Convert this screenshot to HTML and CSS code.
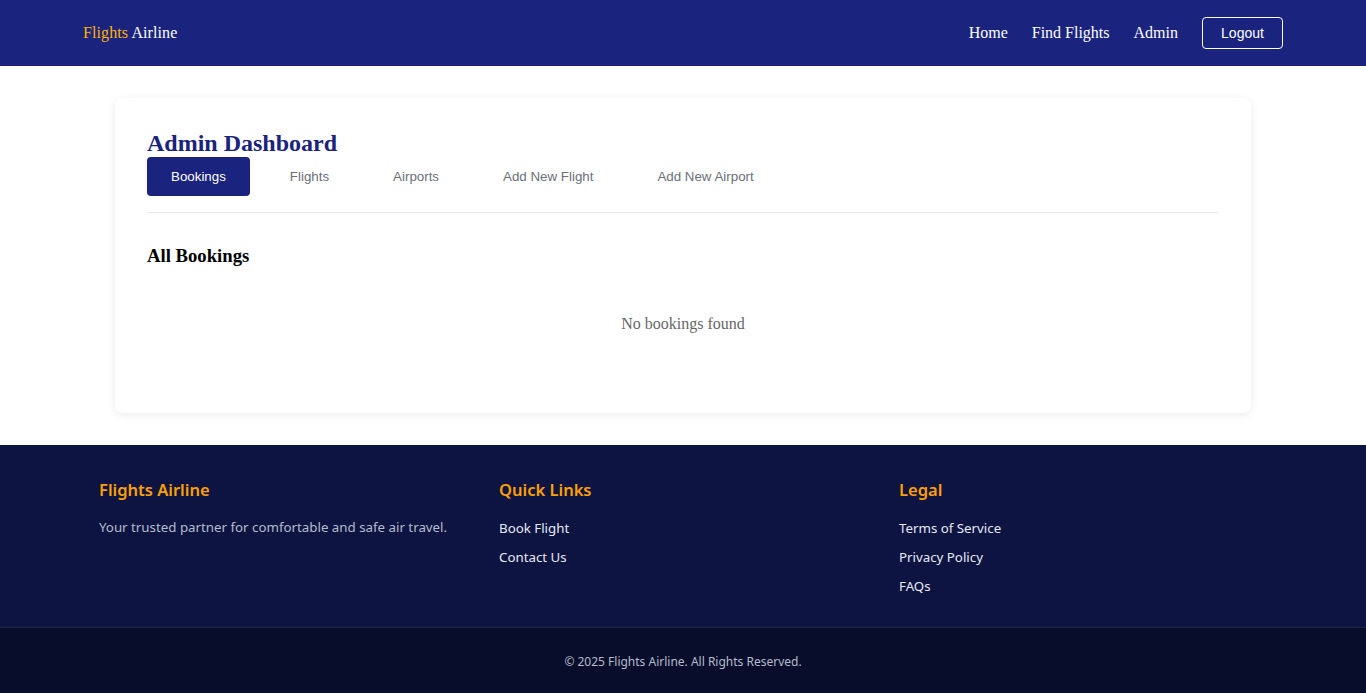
FILE: index.html
```html
<!DOCTYPE html>
<html lang="en">
<head>
<meta charset="utf-8">
<title>Admin Dashboard - Flights Airline</title>
<link rel="stylesheet" href="styles.css">
</head>
<body>
<header class="topbar">
  <div class="topbar-inner">
    <a class="brand" href="#"><span class="brand-accent">Flights</span> Airline</a>
    <nav class="nav">
      <a class="nav-link" href="#">Home</a>
      <a class="nav-link" href="#">Find Flights</a>
      <a class="nav-link" href="#">Admin</a>
      <button class="logout-btn" type="button">Logout</button>
    </nav>
  </div>
</header>

<main class="main">
  <section class="card">
    <h1 class="card-title">Admin Dashboard</h1>
    <div class="tabs">
      <button class="tab tab-active" type="button">Bookings</button>
      <button class="tab" type="button">Flights</button>
      <button class="tab" type="button">Airports</button>
      <button class="tab" type="button">Add New Flight</button>
      <button class="tab" type="button">Add New Airport</button>
    </div>
    <div class="panel">
      <h3 class="panel-title">All Bookings</h3>
      <p class="empty">No bookings found</p>
    </div>
  </section>
</main>

<footer class="footer">
  <div class="footer-inner">
    <div class="footer-col">
      <h4 class="footer-heading">Flights Airline</h4>
      <p class="footer-text">Your trusted partner for comfortable and safe air travel.</p>
    </div>
    <div class="footer-col">
      <h4 class="footer-heading">Quick Links</h4>
      <ul class="footer-links">
        <li><a href="#">Book Flight</a></li>
        <li><a href="#">Contact Us</a></li>
      </ul>
    </div>
    <div class="footer-col">
      <h4 class="footer-heading">Legal</h4>
      <ul class="footer-links">
        <li><a href="#">Terms of Service</a></li>
        <li><a href="#">Privacy Policy</a></li>
        <li><a href="#">FAQs</a></li>
      </ul>
    </div>
  </div>
  <div class="footer-bottom">© 2025 Flights Airline. All Rights Reserved.</div>
</footer>
</body>
</html>
```

FILE: styles.css
```css
* { box-sizing: border-box; }

body {
  margin: 0;
  font-family: "Liberation Serif", "Times New Roman", serif;
  background: #ffffff;
  color: #000;
}

a { text-decoration: none; }

.topbar {
  background: #1a237e;
  height: 66px;
}

.topbar-inner {
  max-width: 1200px;
  margin: 0 auto;
  height: 100%;
  display: flex;
  align-items: center;
  justify-content: space-between;
}

.brand {
  color: #ffffff;
  font-size: 16px;
  letter-spacing: 0.1px;
}

.brand-accent { color: #ffb300; }

.nav {
  display: flex;
  align-items: center;
  gap: 24px;
}

.nav-link {
  color: #ffffff;
  font-size: 16px;
}

.logout-btn {
  font-family: "Liberation Sans", Arial, sans-serif;
  font-size: 14px;
  color: #ffffff;
  background: transparent;
  border: 1px solid #ffffff;
  border-radius: 4px;
  width: 81px;
  height: 32px;
  padding: 0;
}

.main {
  max-width: 1200px;
  margin: 0 auto;
  padding: 32px;
}

.card {
  background: #fff;
  border-radius: 8px;
  box-shadow: 0 2px 10px rgba(0, 0, 0, 0.08);
  padding: 32px 32px 80px;
}

.card-title {
  margin: 0;
  color: #1a237e;
  font-size: 24px;
  line-height: 27px;
  font-weight: bold;
}

.tabs {
  display: flex;
  gap: 16px;
  border-bottom: 1px solid #e9e9e9;
  padding-bottom: 16px;
}

.tab {
  font-family: "Liberation Sans", Arial, sans-serif;
  font-size: 13.33px;
  height: 39px;
  padding: 0 24px;
  border: none;
  border-radius: 4px;
  background: transparent;
  color: #6b6f7a;
}

.tab-active {
  background: #1a237e;
  color: #ffffff;
}

.panel { padding-top: 32px; }

.panel-title {
  margin: 0;
  font-size: 18.7px;
  line-height: 22px;
  font-weight: bold;
}

.empty {
  margin: 48px 0 0;
  text-align: center;
  color: #666;
  font-size: 16px;
  line-height: 18px;
}

.footer {
  background: #0d1442;
  font-family: "Noto Sans", "Open Sans", sans-serif;
}

.footer-inner {
  max-width: 1200px;
  margin: 0 auto;
  padding: 32px 16px 31px;
  display: grid;
  grid-template-columns: repeat(3, 1fr);
  gap: 32px;
}

.footer-heading {
  margin: 0 0 14px;
  color: #ffa000;
  font-size: 16.5px;
  line-height: 25px;
  font-weight: 600;
}

.footer-text {
  margin: 0;
  color: #b4bccb;
  font-size: 13.3px;
  line-height: 22px;
}

.footer-links {
  list-style: none;
  margin: 0;
  padding: 0;
  display: flex;
  flex-direction: column;
  gap: 7px;
}

.footer-links li { height: 22px; }

.footer-links a {
  color: #e6e9f2;
  font-size: 13.3px;
  line-height: 22px;
}

.footer-bottom {
  background: #080d2b;
  border-top: 1px solid rgba(255, 255, 255, 0.1);
  height: 66px;
  display: flex;
  align-items: center;
  justify-content: center;
  padding-top: 2px;
  color: #b4bccb;
  font-size: 12px;
}
```
